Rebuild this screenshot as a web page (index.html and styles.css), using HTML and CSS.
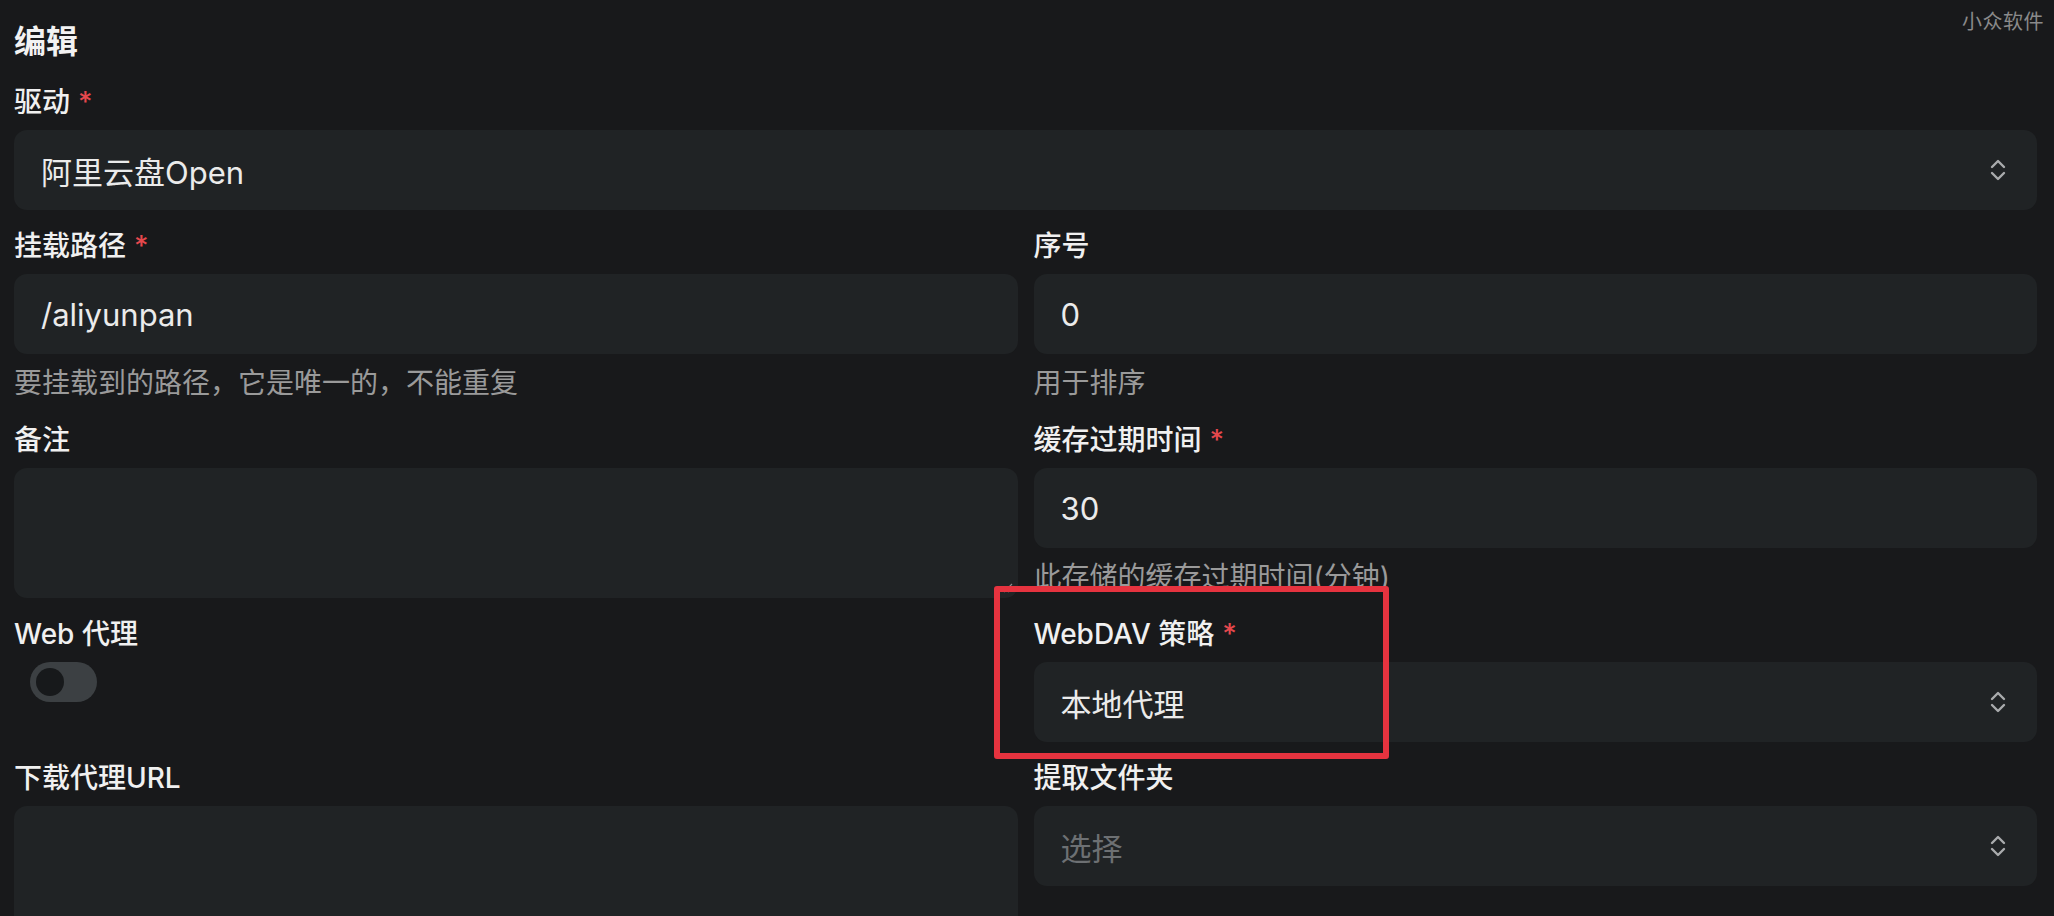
FILE: index.html
```html
<!DOCTYPE html>
<html lang="zh-CN">
<head>
<meta charset="utf-8">
<title>编辑</title>
<link rel="stylesheet" href="styles.css">
</head>
<body>
<div class="watermark">小众软件</div>
<main class="page">
  <h1 class="title">编辑</h1>
  <div class="form">
    <div class="field full">
      <div class="label">驱动<span class="req">*</span></div>
      <div class="control select">
        <span class="value">阿里云盘Open</span>
        <svg class="chev" viewBox="0 0 16 24" width="16" height="24"><path d="M2 9 L8 3 L14 9 M2 15 L8 21 L14 15"/></svg>
      </div>
    </div>

    <div class="field">
      <div class="label">挂载路径<span class="req">*</span></div>
      <div class="control"><span class="value">/aliyunpan</span></div>
      <div class="help">要挂载到的路径，它是唯一的，不能重复</div>
    </div>
    <div class="field">
      <div class="label">序号</div>
      <div class="control"><span class="value">0</span></div>
      <div class="help">用于排序</div>
    </div>

    <div class="field">
      <div class="label">备注</div>
      <div class="control area">
        <svg class="grip" viewBox="0 0 10 10" width="10" height="10"><path d="M9 1 L1 9 M9 5 L5 9"/></svg>
      </div>
    </div>
    <div class="field">
      <div class="label">缓存过期时间<span class="req">*</span></div>
      <div class="control"><span class="value">30</span></div>
      <div class="help">此存储的缓存过期时间(分钟)</div>
    </div>

    <div class="field">
      <div class="label">Web 代理</div>
      <div class="toggle"><span class="knob"></span></div>
    </div>
    <div class="field marked">
      <div class="label">WebDAV 策略<span class="req">*</span></div>
      <div class="control select">
        <span class="value">本地代理</span>
        <svg class="chev" viewBox="0 0 16 24" width="16" height="24"><path d="M2 9 L8 3 L14 9 M2 15 L8 21 L14 15"/></svg>
      </div>
      <div class="highlight"></div>
    </div>

    <div class="field">
      <div class="label">下载代理URL</div>
      <div class="control area tall"></div>
    </div>
    <div class="field">
      <div class="label">提取文件夹</div>
      <div class="control select">
        <span class="value placeholder">选择</span>
        <svg class="chev" viewBox="0 0 16 24" width="16" height="24"><path d="M2 9 L8 3 L14 9 M2 15 L8 21 L14 15"/></svg>
      </div>
    </div>
  </div>
</main>
</body>
</html>
```

FILE: styles.css
```css
html, body {
  margin: 0;
  padding: 0;
  background: #18191b;
  height: 916px;
  overflow: hidden;
}

body {
  font-family: Inter, "Noto Sans CJK SC", "Noto Sans", sans-serif;
  color: #ececec;
  position: relative;
}

.watermark {
  position: absolute;
  top: 7px;
  right: 10px;
  font-size: 20px;
  line-height: 30px;
  color: #8a8a8a;
  letter-spacing: 0.5px;
}

.page {
  padding: 22px 17px 0 14px;
}

.title {
  margin: 0 0 22px;
  font-size: 32px;
  line-height: 40px;
  font-weight: 700;
  color: #f2f2f2;
}

.form {
  display: grid;
  grid-template-columns: 1fr 1fr;
  column-gap: 16px;
  row-gap: 18px;
}

.field {
  display: flex;
  flex-direction: column;
  min-width: 0;
}

.field.full {
  grid-column: 1 / span 2;
}

.field.marked {
  position: relative;
}

.label {
  font-size: 28px;
  line-height: 36px;
  font-weight: 500;
  color: #f0f0f0;
  margin-bottom: 10px;
  white-space: nowrap;
}

.req {
  color: #e5484d;
  margin-left: 8px;
}

.control {
  height: 80px;
  box-sizing: border-box;
  background: #202325;
  border-radius: 13px;
  padding: 0 27px;
  display: flex;
  align-items: center;
  justify-content: space-between;
  font-size: 31px;
  color: #ebebeb;
}

.control.area {
  height: 130px;
  position: relative;
}

.control.area.tall {
  height: 200px;
}

.value.placeholder {
  color: #6d7073;
}

.chev {
  margin-right: 4px;
  flex: none;
}

.chev path {
  fill: none;
  stroke: #a9abad;
  stroke-width: 2.4;
  stroke-linecap: round;
  stroke-linejoin: round;
}

.grip {
  position: absolute;
  right: 5px;
  bottom: 5px;
}

.grip path {
  fill: none;
  stroke: #8c8c8c;
  stroke-width: 1.2;
}

.help {
  margin-top: 11px;
  margin-bottom: 3px;
  font-size: 28px;
  line-height: 36px;
  color: #9a9a9a;
  white-space: nowrap;
}

.toggle {
  width: 67px;
  height: 40px;
  margin-left: 16px;
  border-radius: 20px;
  background: #3c4043;
  display: flex;
  align-items: center;
  padding-left: 6px;
  box-sizing: border-box;
}

.knob {
  width: 28px;
  height: 28px;
  border-radius: 50%;
  background: #17191b;
}

.highlight {
  position: absolute;
  left: -40px;
  top: -30px;
  width: 395px;
  height: 173px;
  box-sizing: border-box;
  border: 6px solid #e6333f;
  border-radius: 3px;
  pointer-events: none;
}
```
